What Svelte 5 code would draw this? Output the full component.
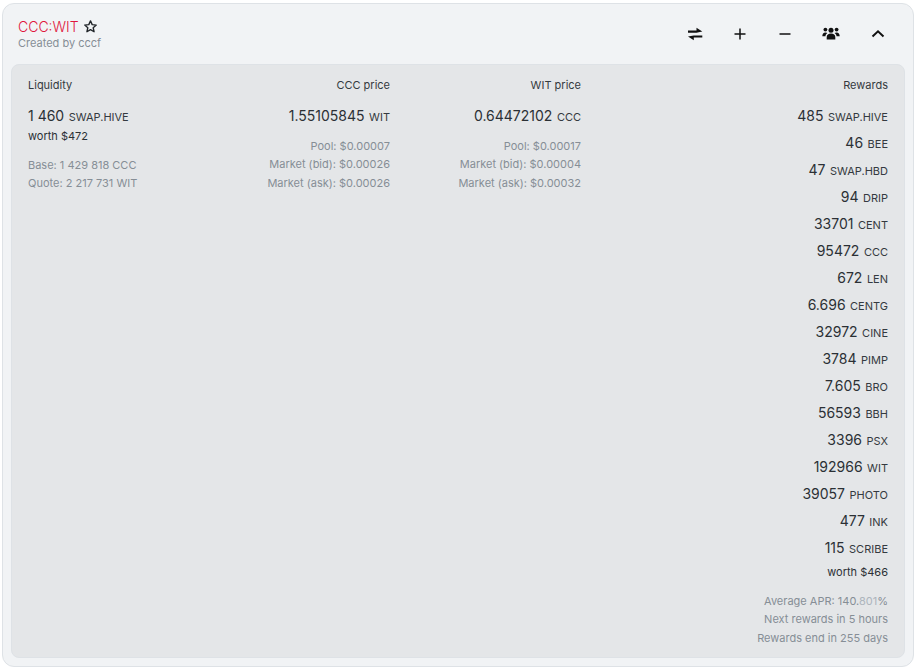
<script>
  const rewards = [
    ['485', 'SWAP.HIVE'], ['46', 'BEE'], ['47', 'SWAP.HBD'], ['94', 'DRIP'], ['33701', 'CENT'],
    ['95472', 'CCC'], ['672', 'LEN'], ['6.696', 'CENTG'], ['32972', 'CINE'], ['3784', 'PIMP'],
    ['7.605', 'BRO'], ['56593', 'BBH'], ['3396', 'PSX'], ['192966', 'WIT'], ['39057', 'PHOTO'],
    ['477', 'INK'], ['115', 'SCRIBE']
  ];
</script>

<div class="page">
  <section class="card">
    <header class="head">
      <div>
        <div class="title">
          <span class="pair">CCC:WIT</span>
          <svg class="star" viewBox="0 0 24 24" width="15" height="15"><path d="M12 3l2.700 6 6.500.7-4.900 4.300 1.400 6.400L12 17.100l-5.700 3.300 1.400-6.400-4.900-4.300 6.500-.7z" fill="none" stroke="#212529" stroke-width="2.200" stroke-linejoin="round"/></svg>
        </div>
        <div class="creator">Created by cccf</div>
      </div>
      <div class="actions">
        <svg viewBox="0 0 16 16" width="16" height="16"><path fill="#111" d="M1 4.500h8.500V1.700L15.300 5.600 9.500 6.700H1zM15.300 9.400v2H6.800v2.900L1 10.400 6.800 9.400z"/></svg>
        <svg viewBox="0 0 16 16" width="16" height="16"><path d="M8 2.500v11M2.500 8h11" stroke="#111" stroke-width="1.500" fill="none"/></svg>
        <svg viewBox="0 0 16 16" width="16" height="16"><path d="M2.500 8h11" stroke="#111" stroke-width="1.500" fill="none"/></svg>
        <svg viewBox="0 0 18 16" width="18" height="16"><g fill="#111"><circle cx="9" cy="4.200" r="2.500"/><circle cx="3.400" cy="3.600" r="1.900"/><circle cx="14.600" cy="3.600" r="1.900"/><path d="M4.700 13.500v-2.600C4.700 8.800 6.500 7.500 9 7.500s4.300 1.300 4.300 3.400v2.600z"/><path d="M.3 10.200C.3 7.700 1.500 6.400 3.400 6.400c.9 0 1.500.3 2 .7-1.200.9-1.900 1.900-1.900 3.100H.3z"/><path d="M17.700 10.200C17.700 7.700 16.500 6.400 14.600 6.400c-.9 0-1.500.3-2 .7 1.200.9 1.900 1.900 1.900 3.100h3.200z"/></g></svg>
        <svg class="chev" viewBox="0 0 16 16" width="16" height="16"><path d="M2.500 10.500 8 5.300l5.500 5.200" stroke="#111" stroke-width="2" fill="none"/></svg>
      </div>
    </header>

    <div class="body">
      <div class="col">
        <div class="label">Liquidity</div>
        <div class="value"><span class="num">1 460</span> <span class="unit">SWAP.HIVE</span></div>
        <div class="worth">worth $472</div>
        <div class="muted first">Base: 1 429 818 CCC</div>
        <div class="muted">Quote: 2 217 731 WIT</div>
      </div>
      <div class="col right">
        <div class="label">CCC price</div>
        <div class="value"><span class="num">1.55105845</span> <span class="unit">WIT</span></div>
        <div class="muted gap">Pool: $0.00007</div>
        <div class="muted">Market (bid): $0.00026</div>
        <div class="muted">Market (ask): $0.00026</div>
      </div>
      <div class="col right">
        <div class="label">WIT price</div>
        <div class="value"><span class="num">0.64472102</span> <span class="unit">CCC</span></div>
        <div class="muted gap">Pool: $0.00017</div>
        <div class="muted">Market (bid): $0.00004</div>
        <div class="muted">Market (ask): $0.00032</div>
      </div>
      <div class="col right">
        <div class="label">Rewards</div>
        <div class="rewards">
          {#each rewards as [n, u]}
            <div class="value reward"><span class="num">{n}</span> <span class="unit">{u}</span></div>
          {/each}
        </div>
        <div class="worth">worth $466</div>
        <div class="muted first">Average APR: 140.<span class="faint">801</span>%</div>
        <div class="muted">Next rewards in 5 hours</div>
        <div class="muted">Rewards end in 255 days</div>
      </div>
    </div>
  </section>
</div>

<style>
  :global(body) {
    margin: 0;
    background: #fff;
    font-family: Inter, "Liberation Sans", sans-serif;
  }
  .page {
    padding: 3px 3px 3px 2px;
    height: 671px;
    box-sizing: border-box;
  }
  .card {
    height: 664px;
    box-sizing: border-box;
    background: #f1f3f5;
    border: 1px solid #dee2e6;
    border-radius: 12px;
    padding: 0 8px 8px 8px;
    display: flex;
    flex-direction: column;
  }
  .head {
    height: 60px;
    flex: none;
    display: flex;
    justify-content: space-between;
    align-items: flex-start;
    padding: 13px 8px 0 7px;
    box-sizing: border-box;
  }
  .title {
    display: flex;
    align-items: center;
    gap: 4px;
    height: 19px;
  }
  .pair {
    color: #e0163d;
    font-size: 14px;
    line-height: 19px;
    font-weight: 300;
  }
  .creator {
    font-size: 11px;
    line-height: 14px;
    color: #868e96;
  }
  .actions {
    display: flex;
    align-items: center;
    gap: 29px;
    margin-top: 9px;
    padding-right: 11px;
  }
  .actions svg { display: block; }
  .actions .chev { margin-left: 1px; }
  .body {
    flex: 1;
    background: #e4e6e8;
    border: 1px solid #dee2e6;
    border-radius: 8px;
    padding: 12px 16px 0 16px;
    display: grid;
    grid-template-columns: 171px 191px 191px 1fr;
    align-content: start;
  }
  .col { min-width: 0; }
  .right { text-align: right; }
  .label {
    font-size: 11px;
    line-height: 16px;
    color: #343a40;
  }
  .value {
    margin-top: 13px;
    line-height: 19px;
    color: #2b3035;
  }
  .reward { margin-top: 0; height: 27px; line-height: 27px; }
  .rewards { margin-top: 9px; }
  .num { font-size: 14px; }
  .unit { font-size: 11px; color: #343a40; }
  .worth {
    font-size: 11px;
    line-height: 16px;
    color: #2b3035;
    margin-top: 1px;
  }
  .rewards + .worth { margin-top: 3px; }
  .muted {
    font-size: 11px;
    line-height: 18.3px;
    color: #868e96;
  }
  .first { margin-top: 12px; }
  .gap { margin-top: 10px; }
  .faint { color: #adb5bd; }
</style>
